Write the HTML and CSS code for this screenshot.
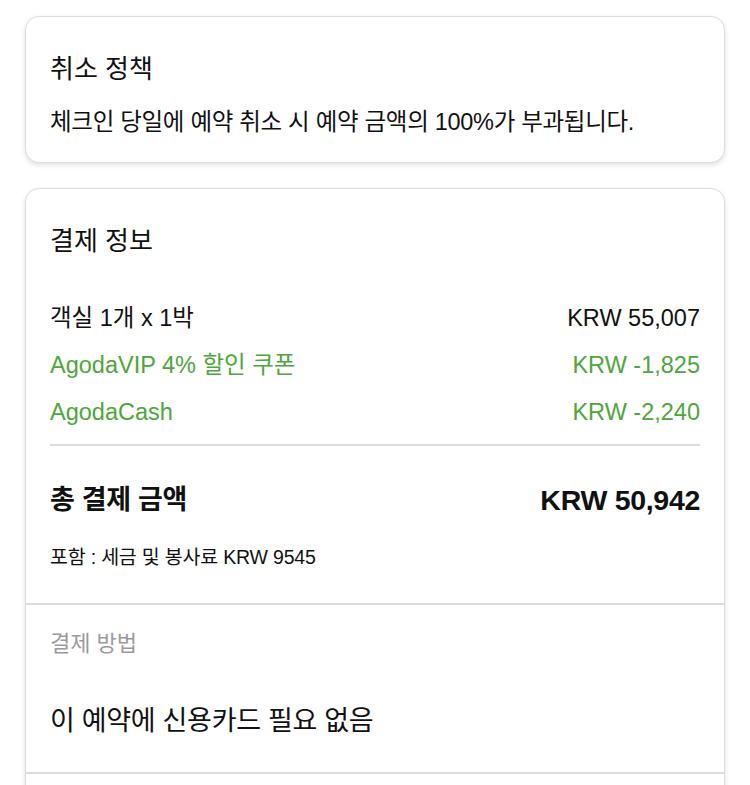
FILE: index.html
```html
<!DOCTYPE html>
<html lang="ko">
<head>
<meta charset="utf-8">
<link rel="stylesheet" href="styles.css">
</head>
<body>
<div class="page">
  <section class="card policy">
    <h2 class="card-title">취소 정책</h2>
    <p class="policy-text">체크인 당일에 예약 취소 시 예약 금액의 100%가 부과됩니다.</p>
  </section>

  <section class="card payment">
    <div class="block">
      <h2 class="card-title">결제 정보</h2>
      <div class="rows">
        <div class="row"><span>객실 1개 x 1박</span><span>KRW 55,007</span></div>
        <div class="row green"><span>AgodaVIP 4% 할인 쿠폰</span><span>KRW -1,825</span></div>
        <div class="row green"><span>AgodaCash</span><span>KRW -2,240</span></div>
      </div>
      <div class="divider"></div>
      <div class="row total"><span>총 결제 금액</span><span class="total-amount">KRW 50,942</span></div>
      <p class="tax">포함 : 세금 및 봉사료 KRW 9545</p>
    </div>
    <div class="block method">
      <p class="method-label">결제 방법</p>
      <p class="method-value">이 예약에 신용카드 필요 없음</p>
    </div>
    <div class="block empty"></div>
  </section>
</div>
</body>
</html>
```

FILE: styles.css
```css
* { box-sizing: border-box; }
html, body { margin: 0; padding: 0; background: #fff; }
body {
  font-family: "Liberation Sans", "Noto Sans CJK KR", sans-serif;
  color: #111;
}
.page {
  padding: 16px 25px 0 25px;
  display: flex;
  flex-direction: column;
  gap: 25px;
}
.card {
  background: #fff;
  border: 1px solid #dcdce0;
  border-radius: 14px;
  box-shadow: 0 2px 5px rgba(0, 0, 0, 0.12);
}
.card-title {
  margin: 0;
  font-size: 26px;
  font-weight: 400;
  line-height: 30px;
}
.policy { padding: 37px 24px 26px; }
.policy-text {
  margin: 24px 0 0;
  font-size: 23.5px;
  letter-spacing: -0.3px;
  line-height: 28px;
}
.block { padding: 0 24px; }
.payment > .block:first-child { padding-top: 37px; padding-bottom: 35px; }
.rows {
  margin-top: 48px;
  display: flex;
  flex-direction: column;
  gap: 19px;
}
.row {
  display: flex;
  justify-content: space-between;
  align-items: center;
  font-size: 23.5px;
  line-height: 28px;
}
.row.green { color: #4ea63c; }
.divider {
  margin-top: 18px;
  height: 2px;
  background: #dcdce0;
}
.row.total {
  margin-top: 38px;
  font-size: 27px;
  font-weight: 700;
  line-height: 32px;
  letter-spacing: -0.3px;
}
.total-amount { font-size: 28.5px; }
.tax {
  margin: 30px 0 0;
  font-size: 19.5px;
  letter-spacing: -0.2px;
  line-height: 22px;
}
.method {
  border-top: 2px solid #dcdce0;
  padding-top: 25px;
  padding-bottom: 35px;
}
.method-label {
  margin: 0;
  font-size: 22px;
  line-height: 28px;
  color: #9a9a9e;
}
.method-value {
  margin: 47px 0 0;
  font-size: 27px;
  letter-spacing: -0.3px;
  line-height: 32px;
}
.empty {
  border-top: 2px solid #dcdce0;
  height: 60px;
}
```
